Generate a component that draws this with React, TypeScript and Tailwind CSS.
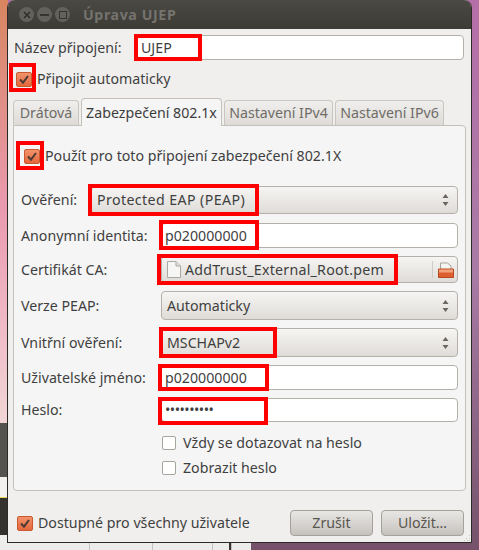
import React from "react";

const font = "font-['Noto_Sans','Open_Sans',sans-serif]";

// red marker box drawn over a field
const Mark = ({ className }: { className: string }) => (
  <span className={`absolute border-[4px] border-[#fe0000] pointer-events-none ${className}`} />
);

const Check = ({ on = true }: { on?: boolean }) =>
  on ? (
    <span className="block w-[16px] h-[15px] shrink-0 rounded-[2px] border border-[#c9592f] bg-gradient-to-b from-[#f2926b] to-[#e4673a]">
      <svg viewBox="0 0 14 13" className="w-[14px] h-[13px]">
        <path d="M3 6.5l3 3.2L11 3" fill="none" stroke="#4a3b34" strokeWidth="2" />
      </svg>
    </span>
  ) : (
    <span className="block w-[14px] h-[14px] shrink-0 rounded-[2px] border border-[#a8a49e] bg-white" />
  );

const Spin = () => (
  <svg viewBox="0 0 7 14" className="w-[7px] h-[14px] mr-[6px] shrink-0">
    <path d="M3.5 1L6.5 5H.5z" fill="#6a665f" />
    <path d="M3.5 13L.5 9h6z" fill="#6a665f" />
  </svg>
);

const Combo = ({ text, mark, h = "h-[29px]", textClass = "" }: { text: string; mark?: string; h?: string; textClass?: string }) => (
  <div className={`relative flex-1 ${h} flex items-center justify-between pl-[5px] pr-[2px] rounded-[4px] border border-[#b5b1aa] bg-gradient-to-b from-[#f6f5f3] to-[#dfdcd8]`}>
    <span className={textClass}>{text}</span>
    <Spin />
    {mark && <Mark className={mark} />}
  </div>
);

const Entry = ({ text, mark, h = "h-[25px]", className = "" }: { text: string; mark?: string; h?: string; className?: string }) => (
  <div className={`relative flex-1 ${h} flex items-center pl-[3px] rounded-[4px] border border-[#b5b1aa] bg-white ${className}`}>
    <span>{text}</span>
    {mark && <Mark className={mark} />}
  </div>
);

const Tab = ({ text, w, active }: { text: string; w: string; active?: boolean }) => (
  <div
    className={
      active
        ? `${w} h-[28px] -mb-px z-10 flex items-center justify-center rounded-t-[4px] border border-b-0 border-[#c4c0ba] bg-[#f5f5f5] text-[#3c3c3c]`
        : `${w} h-[25px] flex items-center justify-center rounded-t-[4px] border border-b-0 border-[#c9c6c1] bg-gradient-to-b from-[#f0efed] to-[#dedbd7] text-[#6f6c68]`
    }
  >
    {text}
  </div>
);

const Row = ({ label, w = "w-[140px]", children }: { label: string; w?: string; children: React.ReactNode }) => (
  <div className="flex items-center">
    <span className={`${w} shrink-0`}>{label}</span>
    {children}
  </div>
);

export default function App() {
  return (
    <div className={`${font} relative w-[479px] h-[550px] overflow-hidden text-[14.2px] leading-[18px] text-[#3f3f3f] bg-gradient-to-b from-[#b56fa8] via-[#a87ba6] to-[#75526a]`}>
      {/* desktop behind the window */}
      <div className="absolute left-0 top-0 w-[8px] h-[423px] bg-gradient-to-b from-[#d8855f] via-[#ea9ab0] to-[#f2d6d6]" />
      <div className="absolute left-0 top-[423px] w-[8px] h-[54px] bg-[#55534f]" />
      <div className="absolute left-0 top-[477px] w-[8px] h-[20px] bg-[#f2f1ef]" />
      <div className="absolute left-0 top-[497px] w-[8px] h-[38px] bg-[#34322f] border-t border-[#e8d84a]" />
      <div className="absolute left-0 top-[535px] w-[8px] h-[15px] bg-[#eeeeee]" />
      <div className="absolute left-0 bottom-0 w-[251px] h-[8px] flex bg-[#ececea]">
        <span className="w-[90px] border-r border-[#c4c2be]" />
        <span className="w-[63px] border-r border-[#c4c2be]" />
        <span className="w-[60px] border-r border-[#c4c2be]" />
        <span className="w-[18px] border-r-2 border-[#3a3230]" />
        <span className="flex-1 border-l border-[#c4c2be]" />
      </div>

      <div className="relative ml-[7px] w-[465px] h-[543px] rounded-t-[8px] flex flex-col bg-[#f0efed] border-x border-b border-[#2c2a27]">
        {/* title bar */}
        <div className="h-[29px] shrink-0 rounded-t-[7px] flex items-center pl-[11px] bg-gradient-to-b from-[#4a4944] to-[#3c3b36]">
          <div className="flex items-center gap-[3px]">
            <span className="w-[15px] h-[15px] rounded-full bg-[#62615c] flex items-center justify-center">
              <svg viewBox="0 0 8 8" className="w-[8px] h-[8px]">
                <path d="M1 1l6 6M7 1L1 7" stroke="#2f2e2b" strokeWidth="1.5" />
              </svg>
            </span>
            <span className="w-[15px] h-[15px] rounded-full bg-[#62615c] flex items-center justify-center">
              <span className="w-[9px] h-[2px] bg-[#35342f]" />
            </span>
            <span className="w-[15px] h-[15px] rounded-full bg-[#62615c] flex items-center justify-center">
              <span className="w-[8px] h-[8px] border border-[#35342f]" />
            </span>
          </div>
          <span className="ml-[13px] font-bold text-[#75736e] tracking-[0.6px]">Úprava UJEP</span>
        </div>

        <div className="flex-1 flex flex-col px-[5px] pt-[6px]">
          <div className="flex items-center h-[25px] mr-[2px]">
            <span className="w-[124px] shrink-0 pl-[1px]">Název připojení:</span>
            <div className="relative flex-1 h-[25px] flex items-center pl-[3px] rounded-[4px] border border-[#b5b1aa] bg-white">
              <span>UJEP</span>
              <Mark className="left-[-4px] top-[-2px] w-[68px] h-[27px]" />
            </div>
          </div>

          <div className="relative flex items-center gap-[5px] h-[18px] mt-[10px] pl-[3px]">
            <Check />
            <span>Připojit automaticky</span>
            <Mark className="left-[-4px] top-[-7px] w-[27px] h-[29px]" />
          </div>

          {/* tabs */}
          <div className="flex items-end gap-[2px] mt-[9px] h-[28px]">
            <Tab text="Drátová" w="w-[66px]" />
            <Tab text="Zabezpečení 802.1x" w="w-[141px]" active />
            <Tab text="Nastavení IPv4" w="w-[109px]" />
            <Tab text="Nastavení IPv6" w="w-[109px]" />
          </div>

          <div className="h-[366px] rounded-b-[4px] rounded-tr-[4px] border border-[#c4c0ba] bg-[#f5f5f5] px-[7px]">
            <div className="relative flex items-center gap-[5px] h-[18px] mt-[21px] pl-[3px]">
              <Check />
              <span>Použít pro toto připojení zabezpečení 802.1X</span>
              <Mark className="left-[-5px] top-[-6px] w-[28px] h-[29px]" />
            </div>

            <div className="flex flex-col gap-[8px] mt-[21px]">
              <div className="mb-[1px]">
                <Row label="Ověření:" w="w-[70px]">
                  <Combo
                    text="Protected EAP (PEAP)"
                    h="h-[28px]"
                    textClass="tracking-[0.4px]"
                    mark="left-[-4px] top-[-3px] w-[171px] h-[32px]"
                  />
                </Row>
              </div>
              <Row label="Anonymní identita:">
                <Entry text="p020000000" mark="left-[-3px] top-[-4px] w-[100px] h-[30px]" />
              </Row>
              <Row label="Certifikát CA:">
                <div className="relative flex-1 h-[27px] flex items-center pl-[5px] rounded-[4px] border border-[#b5b1aa] bg-gradient-to-b from-[#f6f5f3] to-[#dfdcd8]">
                  <svg viewBox="0 0 14 17" className="w-[14px] h-[17px] mr-[4px] shrink-0">
                    <path d="M.5 .5h8.5l4.5 4.5v11.5h-13z" fill="#f6f6f4" stroke="#a9a9a5" />
                    <path d="M9 .5V5h4.5" fill="#dededb" stroke="#a9a9a5" />
                  </svg>
                  <span className="tracking-[0.25px]">AddTrust_External_Root.pem</span>
                  <span className="ml-auto w-px h-[17px] bg-[#cfccc7]" />
                  <svg viewBox="0 0 16 16" className="w-[16px] h-[16px] ml-[5px] mr-[3px] shrink-0">
                    <path d="M2.5 1h7l3.5 3v4H2.5z" fill="#f6f4f1" stroke="#a6a29c" />
                    <path d="M.5 7h15v8.5H.5z" fill="#dd5f30" stroke="#b8481f" />
                    <path d="M1 7.5h14v3H1z" fill="#f2a37c" />
                  </svg>
                  <Mark className="left-[-5px] top-[-3px] w-[241px] h-[31px]" />
                </div>
              </Row>
              <Row label="Verze PEAP:">
                <Combo text="Automaticky" />
              </Row>
              <Row label="Vnitřní ověření:">
                <Combo text="MSCHAPv2" mark="left-[-3px] top-[-2px] w-[118px] h-[31px]" />
              </Row>
              <Row label="Uživatelské jméno:">
                <Entry text="p020000000" mark="left-[-4px] top-[-2px] w-[111px] h-[27px]" />
              </Row>
              <Row label="Heslo:">
                <Entry text="••••••••••" h="h-[24px]" mark="left-[-4px] top-[-2px] w-[110px] h-[28px]" className="tracking-[-0.5px]" />
              </Row>
            </div>

            <div className="flex flex-col gap-[11px] mt-[14px] ml-[141px]">
              <div className="flex items-center gap-[7px] h-[14px]">
                <Check on={false} />
                <span>Vždy se dotazovat na heslo</span>
              </div>
              <div className="flex items-center gap-[7px] h-[14px]">
                <Check on={false} />
                <span>Zobrazit heslo</span>
              </div>
            </div>
          </div>

          {/* footer */}
          <div className="flex items-center mt-[19px] pl-[4px]">
            <Check />
            <span className="ml-[5px]">Dostupné pro všechny uživatele</span>
            <div className="ml-auto flex gap-[8px] mr-[2px]">
              <button className="w-[83px] h-[26px] rounded-[4px] border border-[#a5a19b] bg-gradient-to-b from-[#e9e7e4] to-[#c5c2be] text-[#5a5650]">Zrušit</button>
              <button className="w-[83px] h-[26px] rounded-[4px] border border-[#a5a19b] bg-gradient-to-b from-[#e9e7e4] to-[#c5c2be] text-[#5a5650]">Uložit…</button>
            </div>
          </div>
        </div>

        {/* resize grip */}
        <svg viewBox="0 0 8 8" className="absolute right-0 bottom-0 w-[8px] h-[8px]">
          <path d="M6 1h1v1H6zM3 4h1v1H3zM6 4h1v1H6zM1 6h1v1H1zM4 6h1v1H4zM6 6h1v1H6z" fill="#c9c6c1" />
        </svg>
      </div>
    </div>
  );
}
